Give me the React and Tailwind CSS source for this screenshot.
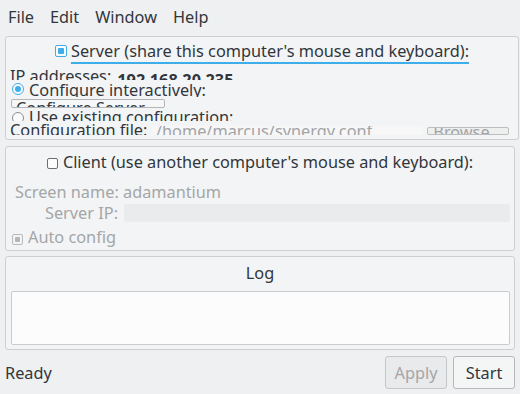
import React from 'react';

function CheckBox({ state }) {
  if (state === 'on') {
    return (
      <span className="w-[12px] h-[12px] shrink-0 border border-[#3daee9] rounded-[2px] bg-[#fcfcfc] p-[2px] flex">
        <span className="flex-1 bg-[#3daee9] rounded-[1px]" />
      </span>
    );
  }
  if (state === 'disabled') {
    return (
      <span className="w-[11px] h-[11px] shrink-0 border border-[#b9babc] rounded-[2px] bg-[#f4f4f5] p-[2px] flex">
        <span className="flex-1 bg-[#b4b6b8] rounded-[1px]" />
      </span>
    );
  }
  return <span className="block w-[11px] h-[11px] shrink-0 border border-[#6c7074] rounded-[2px] bg-[#fcfcfc]" />;
}

function Radio({ on }) {
  return (
    <span
      className={
        'w-[12px] h-[12px] shrink-0 rounded-full border bg-[#fcfcfc] p-[2px] flex ' +
        (on ? 'border-[#3daee9]' : 'border-[#8a8d90]')
      }
    >
      {on && <span className="flex-1 rounded-full bg-[#3daee9]" />}
    </span>
  );
}

export default function App() {
  return (
    <div className="w-[520px] h-[394px] overflow-hidden bg-[#eff0f1] text-[#31363b] text-[16.3px] leading-4 font-['Noto_Sans',sans-serif]">
      {/* Menu bar */}
      <div className="flex h-[30px] pt-[9px]">
        {['File', 'Edit', 'Window', 'Help'].map((m) => (
          <span key={m} className="px-2">
            {m}
          </span>
        ))}
      </div>

      <div className="flex flex-col px-[5px] pt-[6px]">
        {/* Server group */}
        <div className="w-[514px] h-[104px] border border-[#cdcecf] rounded-[3px] bg-[#f3f4f5] flex flex-col overflow-hidden">
          <div className="flex justify-center items-start h-[31px] pt-[6px] shrink-0">
            <span className="mt-[2px]">
              <CheckBox state="on" />
            </span>
            <span className="ml-[4px] pb-[3px] border-b-2 border-[#3daee9]">
              Server (share this computer's mouse and keyboard):
            </span>
          </div>

          <div className="flex items-start h-[12px] overflow-hidden pl-[4px] shrink-0">
            <span>IP addresses:</span>
            <span className="ml-[6px] mt-[4px] font-bold">192.168.20.235</span>
          </div>

          <div className="flex items-start h-[17px] overflow-hidden pl-[6px] shrink-0">
            <span className="mt-[3px]">
              <Radio on />
            </span>
            <span className="ml-[5px] pt-[2px]">Configure interactively:</span>
          </div>

          <div className="flex items-start h-[11px] overflow-hidden pl-[5px] shrink-0">
            <div className="mt-[2px] h-[9px] w-[154px] border border-[#b3b5b7] rounded-[2px] bg-[#f6f7f7] overflow-hidden">
              <span className="block pl-[4px] leading-4">Configure Server</span>
            </div>
          </div>

          <div className="flex items-start h-[13px] overflow-hidden pl-[6px] shrink-0">
            <span className="mt-[4px]">
              <Radio />
            </span>
            <span className="ml-[5px] pt-[1px]">Use existing configuration:</span>
          </div>

          <div className="flex items-start h-[14px] overflow-hidden pl-[4px] shrink-0">
            <span className="w-[142px] shrink-0 pt-[1px] whitespace-nowrap">Configuration file:</span>
            <div className="mt-[5px] h-[9px] w-[271px] bg-[#f7f7f8] overflow-hidden">
              <span className="block pl-[4px] leading-[10px] text-[#a2a4a6] whitespace-nowrap">/home/marcus/synergy.conf</span>
            </div>
            <div className="ml-[4px] mt-[6px] h-[8px] w-[82px] border border-[#bcbdbf] rounded-[2px] bg-[#eeefef] overflow-hidden">
              <span className="block text-center leading-[8px] text-[#a2a4a6]">Browse...</span>
            </div>
          </div>
        </div>

        {/* Client group */}
        <div className="mt-[6px] w-[510px] h-[105px] border border-[#cdcecf] rounded-[3px] bg-[#f3f4f5] flex flex-col">
          <div className="flex justify-center items-start pt-[7px]">
            <span className="mt-[4px]">
              <CheckBox />
            </span>
            <span className="ml-[5px]">Client (use another computer's mouse and keyboard):</span>
          </div>
          <div className="mt-[14px] pl-[9px] text-[#a4a6a8]">Screen name: adamantium</div>
          <div className="mt-[4px] flex items-center h-[18px]">
            <span className="w-[112px] text-right text-[#a4a6a8]">Server IP:</span>
            <div className="ml-[6px] mr-[4px] flex-1 h-[18px] bg-[#eaebec] rounded-[2px]" />
          </div>
          <div className="mt-[7px] flex items-start pl-[6px]">
            <span className="mt-[5px]">
              <CheckBox state="disabled" />
            </span>
            <span className="ml-[5px] text-[#a4a6a8]">Auto config</span>
          </div>
        </div>

        {/* Log group */}
        <div className="mt-[5px] w-[510px] h-[94px] border border-[#cdcecf] rounded-[3px] bg-[#f3f4f5] flex flex-col">
          <div className="pt-[8px] text-center">Log</div>
          <div className="mt-[10px] ml-[5px] w-[499px] h-[54px] border border-[#cbcccd] rounded-[2px] bg-[#fcfcfc]" />
        </div>

        {/* Status row */}
        <div className="mt-[6px] flex items-center justify-between">
          <span>Ready</span>
          <div className="flex gap-[6px]">
            <button className="w-[62px] h-[33px] border border-[#c6c7c8] rounded-[3px] bg-[#e9eaeb] text-[#a4a6a8]">
              Apply
            </button>
            <button className="w-[62px] h-[33px] border border-[#b7b8b9] rounded-[3px] bg-[#f4f5f5]">
              Start
            </button>
          </div>
        </div>
      </div>
    </div>
  );
}
